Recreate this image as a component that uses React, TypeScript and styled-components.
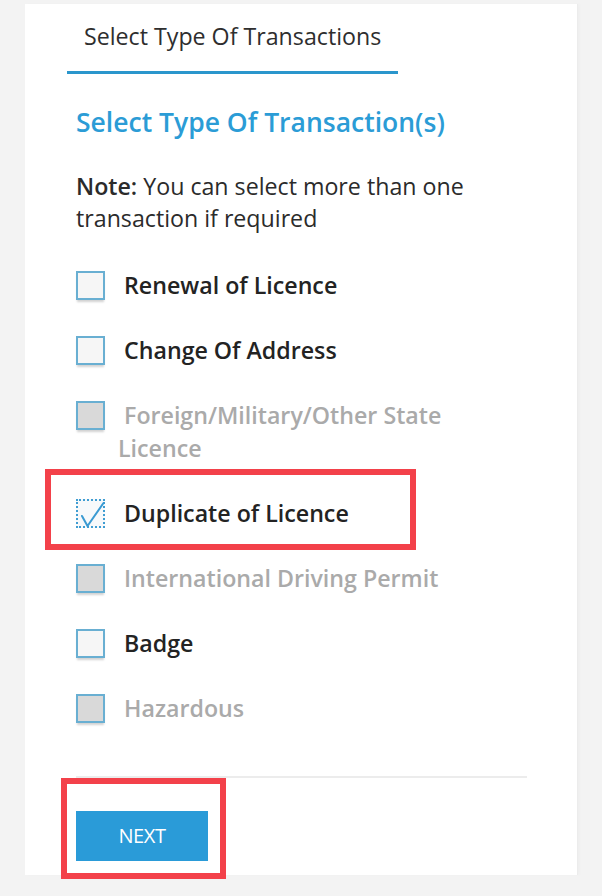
import React from "react";
import styled, { createGlobalStyle } from "styled-components";

const GlobalStyle = createGlobalStyle`
  html, body {
    margin: 0;
    padding: 0;
    background: #f3f3f3;
  }
  body {
    font-family: "Open Sans", "Noto Sans", sans-serif;
    color: #2b2b2b;
  }
`;

const Page = styled.div`
  padding: 4px 0 20px 25px;
`;

const Card = styled.div`
  width: 552px;
  height: 871px;
  background: #ffffff;
  box-shadow: 1px 0 0 #ececec, 3px 0 3px rgba(0, 0, 0, 0.02);
  box-sizing: border-box;
`;

const TabBar = styled.div`
  margin-left: 42px;
  width: 331px;
  box-sizing: border-box;
  padding: 17px 0 20px 17px;
  border-bottom: 3px solid #2a96cc;
`;

const TabLabel = styled.div`
  font-size: 23.2px;
  line-height: 30px;
  color: #2e2e2e;
  font-weight: 400;
`;

const Body = styled.div`
  padding: 31px 50px 0 51px;
`;

const Heading = styled.h2`
  margin: 0;
  font-size: 26.5px;
  line-height: 34px;
  font-weight: 600;
  color: #2b9cd6;
`;

const Note = styled.p`
  margin: 31px 0 0 0;
  font-size: 23.2px;
  line-height: 32px;
  color: #2b2b2b;
  max-width: 420px;

  b {
    font-weight: 600;
  }
`;

const List = styled.div`
  margin-top: 34.5px;
  display: flex;
  flex-direction: column;
  gap: 32px;
  width: 430px;
`;

const Row = styled.div`
  position: relative;
  display: flex;
  align-items: flex-start;
  gap: 13px;
`;

const Box = styled.span<{ $disabled?: boolean; $checked?: boolean }>`
  flex: none;
  position: relative;
  width: 29px;
  height: 29px;
  margin-top: 2px;
  box-sizing: border-box;
  background: ${(p) => (p.$disabled ? "#d9d9d9" : p.$checked ? "#f7f9fb" : "#f6f6f6")};
  border: 2px ${(p) => (p.$checked ? "dotted" : "solid")}
    ${(p) => (p.$checked ? "#3f9dd2" : "#69afd2")};
  box-shadow: ${(p) => (p.$checked ? "none" : "0 3px 2px -1px rgba(0, 0, 0, 0.18)")};

  svg {
    position: absolute;
    left: -2px;
    top: -2px;
  }
`;

const Label = styled.span<{ $disabled?: boolean }>`
  flex: 1;
  font-size: 23.2px;
  line-height: 33px;
  font-weight: 600;
  color: ${(p) => (p.$disabled ? "#aaaaaa" : "#232323")};
`;

const Highlight = styled.span`
  position: absolute;
  left: -31px;
  top: -28px;
  width: 371px;
  height: 81px;
  box-sizing: border-box;
  border: 6px solid #f3414a;
  pointer-events: none;
`;

const Divider = styled.hr`
  margin: 51px 0 0 0;
  border: none;
  height: 2px;
  background: #ececec;
`;

const Footer = styled.div`
  margin-top: 33px;
`;

const ButtonWrap = styled.div`
  position: relative;
  display: inline-block;
`;

const NextButton = styled.button`
  display: block;
  width: 132px;
  height: 50px;
  border: none;
  border-radius: 0;
  background: #2a9bd8;
  color: #ffffff;
  font-family: "Open Sans", "Noto Sans", sans-serif;
  font-size: 20px;
  font-weight: 400;
  letter-spacing: -0.4px;
  padding: 0;
`;

const ButtonHighlight = styled.span`
  position: absolute;
  left: -15px;
  top: -33px;
  width: 165px;
  height: 101px;
  box-sizing: border-box;
  border: 6px solid #f3414a;
  pointer-events: none;
`;

type Item = {
  label: string;
  disabled?: boolean;
  checked?: boolean;
  highlight?: boolean;
};

const items: Item[] = [
  { label: "Renewal of Licence" },
  { label: "Change Of Address" },
  { label: "Foreign/Military/Other State Licence", disabled: true },
  { label: "Duplicate of Licence", checked: true, highlight: true },
  { label: "International Driving Permit", disabled: true },
  { label: "Badge" },
  { label: "Hazardous", disabled: true },
];

const Check = () => (
  <svg width="29" height="29" viewBox="0 0 29 29" fill="none">
    <path
      d="M6 17 L11.5 27 L27.5 4"
      stroke="#3a9ad2"
      strokeWidth="2"
      strokeLinecap="round"
      strokeLinejoin="round"
    />
  </svg>
);

export default function App() {
  return (
    <>
      <GlobalStyle />
      <Page>
        <Card>
          <TabBar>
            <TabLabel>Select Type Of Transactions</TabLabel>
          </TabBar>
          <Body>
            <Heading>Select Type Of Transaction(s)</Heading>
            <Note>
              <b>Note:</b> You can select more than one transaction if required
            </Note>
            <List>
              {items.map((it) => (
                <Row key={it.label}>
                  <Box $disabled={it.disabled} $checked={it.checked}>
                    {it.checked && <Check />}
                  </Box>
                  <Label $disabled={it.disabled}>{"\u00a0" + it.label}</Label>
                  {it.highlight && <Highlight />}
                </Row>
              ))}
            </List>
            <Divider />
            <Footer>
              <ButtonWrap>
                <NextButton>NEXT</NextButton>
                <ButtonHighlight />
              </ButtonWrap>
            </Footer>
          </Body>
        </Card>
      </Page>
    </>
  );
}
